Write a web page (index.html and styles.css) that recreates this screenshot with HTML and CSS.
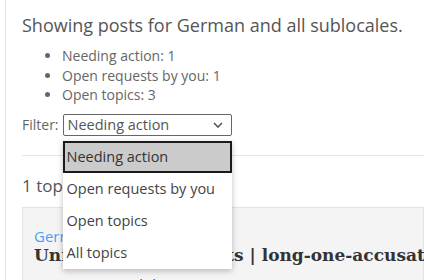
FILE: index.html
```html
<!DOCTYPE html>
<html lang="en">
<head>
    <meta charset="UTF-8">
    <title>Posts</title>
    <link rel="stylesheet" href="styles.css">
</head>
<body>
    <div class="page">
        <h2 class="summary-title">Showing posts for German and all sublocales.</h2>
        <ul class="counts">
            <li>Needing action: 1</li>
            <li>Open requests by you: 1</li>
            <li>Open topics: 3</li>
        </ul>

        <div class="filter-row">
            <label for="filter">Filter:</label>
            <div class="select-wrap">
                <div class="select-box" id="filter">
                    <span>Needing action</span>
                    <svg class="chevron" width="10" height="6" viewBox="0 0 10 6">
                        <path d="M1 1l4 4 4-4" fill="none" stroke="#555" stroke-width="1.6"/>
                    </svg>
                </div>
                <ul class="options">
                    <li class="selected">Needing action</li>
                    <li>Open requests by you</li>
                    <li>Open topics</li>
                    <li>All topics</li>
                </ul>
            </div>
        </div>

        <hr class="divider">

        <h3 class="topic-count">1 topic</h3>

        <div class="topic-card">
            <a class="locale-link" href="#">German</a>
            <h4 class="topic-title">Units of weights units | long-one-accusative</h4>
            <p class="topic-param">Parameter: “Kobik{0}”</p>
        </div>
    </div>
</body>
</html>
```

FILE: styles.css
```css
body {
    margin: 0;
    font-family: 'Open Sans', sans-serif;
    color: #555;
    background-color: white;
    overflow: hidden;
    height: 280px;
}
.page {
    margin-left: 5px;
    border-left: 1px solid #e2e2e2;
    padding: 12px 0 0 16px;
    min-height: 280px;
}
.summary-title {
    margin: 0;
    font-size: 18px;
    font-weight: normal;
    color: #555;
    line-height: 26px;
}
.counts {
    margin: 8px 0 0;
    padding-left: 40px;
    font-size: 14px;
    line-height: 19.5px;
    color: #666;
}
.filter-row {
    display: flex;
    align-items: center;
    gap: 4px;
    margin-top: 9px;
    font-size: 14px;
    color: #666;
}
.select-wrap {
    position: relative;
}
.select-box {
    display: flex;
    align-items: center;
    justify-content: space-between;
    box-sizing: border-box;
    width: 169px;
    height: 22px;
    padding: 0 5px 0 4px;
    border: 1px solid #666;
    border-radius: 2px;
    font-size: 14.5px;
    color: #555;
}
.chevron {
    margin-right: 3px;
}
.options {
    position: absolute;
    top: 27px;
    left: 0;
    width: 169px;
    margin: 0;
    padding: 0;
    list-style: none;
    background-color: white;
    box-shadow: 0 2px 6px rgba(0,0,0,0.25);
    font-size: 14.5px;
    color: #444;
    z-index: 2;
}
.options li {
    box-sizing: border-box;
    height: 32px;
    line-height: 32px;
    padding-left: 4px;
}
.options li.selected {
    background-color: #cbcbcb;
    border: 2px solid #1a1a1a;
    line-height: 28px;
    padding-left: 2px;
    color: #333;
}
.divider {
    margin: 19px 0 0;
    border: none;
    border-top: 1px solid #e6e6e6;
}
.topic-count {
    margin: 18px 0 0;
    font-size: 17px;
    font-weight: normal;
    line-height: 24px;
    color: #555;
}
.topic-card {
    margin-top: 9px;
    padding: 19px 11px 14px;
    background-color: #f4f4f4;
    border: 1px solid #e4e4e4;
}
.locale-link {
    display: block;
    font-size: 15px;
    line-height: 18px;
    color: #4a9ff0;
    text-decoration: none;
}
.topic-title {
    margin: 0;
    font-family: 'DejaVu Serif', Georgia, serif;
    font-size: 17px;
    line-height: 20px;
    color: #333;
    white-space: nowrap;
}
.topic-param {
    margin: 9px 0 0;
    font-size: 15px;
    line-height: 20px;
}
```
